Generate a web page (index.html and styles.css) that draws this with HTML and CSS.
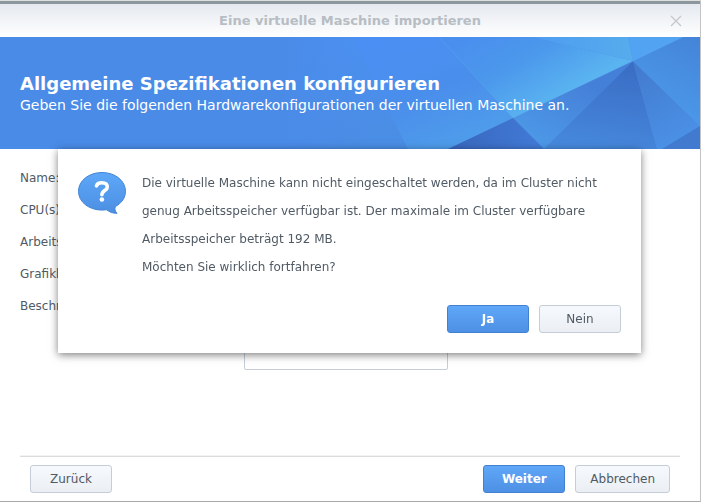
FILE: index.html
```html
<!DOCTYPE html>
<html lang="de">
<head>
    <meta charset="UTF-8">
    <meta name="viewport" content="width=device-width, initial-scale=1.0">
    <title>Eine virtuelle Maschine importieren</title>
    <link rel="stylesheet" href="styles.css">
</head>
<body>
    <div class="window">
        <header class="titlebar">
            <h1>Eine virtuelle Maschine importieren</h1>
            <button type="button" class="close" aria-label="Schließen">
                <svg width="12" height="12" viewBox="0 0 12 12"><path d="M1 1L11 11M11 1L1 11" stroke="#c4c7cb" stroke-width="1.3"/></svg>
            </button>
        </header>

        <div class="banner">
            <svg class="banner-art" width="415" height="112" viewBox="0 0 415 112" aria-hidden="true">
                <defs>
                    <linearGradient id="base" x1="0" y1="0" x2="0" y2="1">
                        <stop offset="0" stop-color="#4b90f1"/>
                        <stop offset="1" stop-color="#4a8de3"/>
                    </linearGradient>
                    <linearGradient id="fade" x1="0" y1="0" x2="1" y2="0">
                        <stop offset="0" stop-color="#4a8be8"/>
                        <stop offset="1" stop-color="#4a8be8" stop-opacity="0"/>
                    </linearGradient>
                    <linearGradient id="mid" gradientUnits="userSpaceOnUse" x1="100" y1="0" x2="150" y2="125">
                        <stop offset="0" stop-color="#4b8ff4"/>
                        <stop offset="0.5" stop-color="#4a8eec"/>
                        <stop offset="1" stop-color="#4f9eea"/>
                    </linearGradient>
                    <linearGradient id="glow" gradientUnits="userSpaceOnUse" x1="210" y1="-20" x2="262" y2="68">
                        <stop offset="0" stop-color="#4a8eee"/>
                        <stop offset="0.5" stop-color="#4b98ec"/>
                        <stop offset="1" stop-color="#5ab4f0"/>
                    </linearGradient>
                    <linearGradient id="top" x1="0" y1="0" x2="1" y2="0">
                        <stop offset="0" stop-color="#4e9cf1"/>
                        <stop offset="1" stop-color="#56acec"/>
                    </linearGradient>
                    <linearGradient id="band" gradientUnits="userSpaceOnUse" x1="290" y1="40" x2="250" y2="112">
                        <stop offset="0" stop-color="#4580d8"/>
                        <stop offset="1" stop-color="#4d9ae8"/>
                    </linearGradient>
                    <linearGradient id="dark" x1="0.6" y1="0" x2="0.4" y2="1">
                        <stop offset="0" stop-color="#3a6dc4"/>
                        <stop offset="1" stop-color="#4688dc"/>
                    </linearGradient>
                    <linearGradient id="low" x1="0" y1="0" x2="1" y2="0">
                        <stop offset="0" stop-color="#3866bd"/>
                        <stop offset="1" stop-color="#427bd7"/>
                    </linearGradient>
                    <linearGradient id="side" x1="0" y1="0" x2="0.4" y2="1">
                        <stop offset="0" stop-color="#4279cc"/>
                        <stop offset="1" stop-color="#4a90e5"/>
                    </linearGradient>
                    <linearGradient id="right" x1="1" y1="0" x2="0.6" y2="1">
                        <stop offset="0" stop-color="#4484d8"/>
                        <stop offset="1" stop-color="#4c9aeb"/>
                    </linearGradient>
                </defs>
                <rect width="415" height="112" fill="url(#base)"/>
                <path d="M67 0H154L228 81L163 112H123Z" fill="url(#mid)"/>
                <path d="M154 0H248L348 24L228 81Z" fill="url(#glow)"/>
                <path d="M248 0H343L348 24Z" fill="url(#top)"/>
                <path d="M343 0H398L348 24Z" fill="#53a3f3"/>
                <path d="M348 24L228 81L259 112Z" fill="url(#band)"/>
                <path d="M228 81L163 112H259Z" fill="url(#low)"/>
                <path d="M348 24L259 112H372Z" fill="url(#dark)"/>
                <path d="M348 24L372 112H377L415 89Z" fill="url(#side)"/>
                <path d="M398 0H415V89L348 24Z" fill="url(#right)"/>
                <path d="M377 112L415 89V112Z" fill="#417acf"/>
                <path d="M154 0L228 81M228 81L398 0" fill="none" stroke="#65b5f3" stroke-opacity="0.3"/>
                <rect width="80" height="112" fill="url(#fade)"/>
            </svg>
            <h2>Allgemeine Spezifikationen konfigurieren</h2>
            <p>Geben Sie die folgenden Hardwarekonfigurationen der virtuellen Maschine an.</p>
        </div>

        <form class="form">
            <label for="name">Name:</label>
            <input type="text" id="name">
            <label for="cpu">CPU(s):</label>
            <input type="text" id="cpu">
            <label for="memory">Arbeitsspeicher:</label>
            <input type="text" id="memory">
            <label for="video">Grafikkarte:</label>
            <input type="text" id="video">
            <label for="description">Beschreibung:</label>
            <textarea id="description"></textarea>
        </form>

        <footer class="footer">
            <button type="button" class="btn">Zurück</button>
            <div class="actions">
                <button type="button" class="btn primary">Weiter</button>
                <button type="button" class="btn">Abbrechen</button>
            </div>
        </footer>
    </div>

    <div class="overlay">
        <div class="dialog" role="alertdialog" aria-labelledby="message">
            <div class="dialog-body">
                <svg class="icon" width="48" height="48" viewBox="0 0 48 48" aria-hidden="true">
                    <defs>
                        <linearGradient id="bubble" x1="0" y1="0" x2="0" y2="1">
                            <stop offset="0" stop-color="#5ea7f8"/>
                            <stop offset="1" stop-color="#4b8fe3"/>
                        </linearGradient>
                    </defs>
                    <path d="M24 3.500C37.300 3.500 47.500 11.800 47.500 22.300C47.500 28.600 43.700 34.100 37.500 37.500C36.300 39.700 36.900 41.900 39 44.300C34.500 44.500 31.300 42.700 28.500 40.800C27 41 25.500 41.100 24 41.100C10.700 41.100 .500 32.800 .500 22.300S10.700 3.500 24 3.500Z" fill="url(#bubble)" stroke="#4585d6"/>
                    <path d="M18.500 16.800C19 14.700 21 13.700 23.800 13.700C27.200 13.700 29.300 15.300 29.300 17.900C29.300 21.600 23.900 21.600 23.900 25.800" fill="none" stroke="#fff" stroke-width="3.600" stroke-linecap="round"/>
                    <circle cx="23.900" cy="30.500" r="2.300" fill="#fff"/>
                </svg>
                <p id="message">Die virtuelle Maschine kann nicht eingeschaltet werden, da im Cluster nicht genug Arbeitsspeicher verfügbar ist. Der maximale im Cluster verfügbare Arbeitsspeicher beträgt 192 MB.<br>Möchten Sie wirklich fortfahren?</p>
            </div>
            <div class="actions">
                <button type="button" class="btn primary">Ja</button>
                <button type="button" class="btn">Nein</button>
            </div>
        </div>
    </div>
</body>
</html>
```
FILE: styles.css
```css
* {
    box-sizing: border-box;
}
body {
    margin: 0;
    font-family: Verdana, "DejaVu Sans", sans-serif;
    font-size: 12px;
    color: #505a64;
    background: #dfe1e2;
}
h1, h2, p {
    margin: 0;
}
.window {
    display: flex;
    flex-direction: column;
    min-height: 100vh;
    border-top: 1px solid #dcdfdc;
    border-right: 1px solid #c4c4c4;
    border-bottom: 1px solid #a8a8a8;
    background: #fff;
}
.titlebar {
    display: flex;
    align-items: center;
    height: 36px;
    padding: 0 18px 0 30px;
    border-top: 3px solid #8b979d;
    background: linear-gradient(#e5e9ef, #fff);
}
.titlebar h1 {
    flex: 1;
    text-align: center;
    font-size: 13px;
    line-height: 18px;
    color: #b7bdc3;
}
.close {
    display: flex;
    padding: 0;
    border: none;
    background: none;
    cursor: pointer;
}
.banner {
    position: relative;
    height: 112px;
    padding: 36px 20px 0;
    background: #4a8be8;
    color: #fff;
}
.banner-art {
    position: absolute;
    top: 0;
    right: 0;
}
.banner h2 {
    position: relative;
    font-size: 18px;
    line-height: 22px;
}
.banner p {
    position: relative;
    font-size: 14px;
    line-height: 20px;
}
.form {
    display: grid;
    grid-template-columns: 220px 204px;
    gap: 4px;
    flex: 1;
    align-content: start;
    padding: 15px 20px;
    line-height: 28px;
}
.form input,
.form textarea {
    width: 100%;
    height: 28px;
    border: 1px solid #c5ced8;
    border-radius: 2px;
    background: #fff;
    font: inherit;
    resize: none;
}
.form textarea {
    height: 78px;
}
.footer {
    display: flex;
    justify-content: space-between;
    margin: 0 20px;
    padding: 8px 10px;
    border-top: 1px solid #dcdcdc;
    box-shadow: 0 -1px #f3f3f3;
}
.actions {
    display: flex;
    justify-content: flex-end;
    gap: 10px;
}
.btn {
    min-width: 82px;
    height: 28px;
    padding: 0 14px;
    border: 1px solid #c5ced8;
    border-radius: 3px;
    background: linear-gradient(#f6f9fd, #ebeef3);
    font: inherit;
    color: #505a64;
    cursor: pointer;
}
.btn.primary {
    border-color: #4280d0;
    background: linear-gradient(#60a7f8, #4d90e4);
    color: #fff;
    font-weight: bold;
}
.overlay {
    position: fixed;
    inset: 0 2px 0 0;
    display: flex;
    align-items: center;
    justify-content: center;
}
.dialog {
    width: 583px;
    padding: 20px;
    background: #fff;
    box-shadow: 0 2px 8px rgba(0, 0, 0, 0.5);
}
.dialog-body {
    display: flex;
    gap: 16px;
    margin-bottom: 24px;
}
.dialog-body .icon {
    flex: none;
}
.dialog-body p {
    line-height: 28px;
}
```
